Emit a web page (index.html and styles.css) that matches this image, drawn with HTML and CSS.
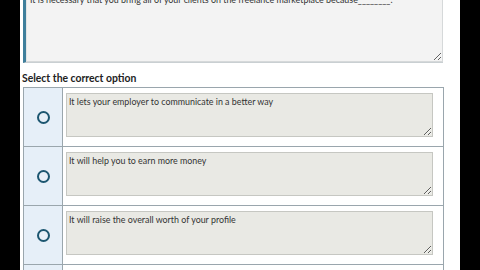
FILE: index.html
```html
<!DOCTYPE html>
<html>
<head>
<meta charset="utf-8">
<link rel="stylesheet" href="styles.css">
</head>
<body>
<div class="frame">
  <div class="side"></div>
  <main class="main">
    <div class="question-wrap">
      <textarea class="question" readonly>It is necessary that you bring all of your clients on the freelance marketplace because________.</textarea>
    </div>
    <div class="label">Select the correct option</div>
    <div class="options">
      <div class="row">
        <div class="radio-cell"><span class="radio"></span></div>
        <div class="answer-cell"><textarea class="answer" readonly>It lets your employer to communicate in a better way</textarea></div>
      </div>
      <div class="row">
        <div class="radio-cell"><span class="radio"></span></div>
        <div class="answer-cell"><textarea class="answer" readonly>It will help you to earn more money</textarea></div>
      </div>
      <div class="row">
        <div class="radio-cell"><span class="radio"></span></div>
        <div class="answer-cell"><textarea class="answer" readonly>It will raise the overall worth of your profile</textarea></div>
      </div>
      <div class="row">
        <div class="radio-cell"><span class="radio"></span></div>
        <div class="answer-cell"><textarea class="answer" readonly>It will make your profile look more attractive to employers</textarea></div>
      </div>
    </div>
  </main>
  <div class="side"></div>
</div>
</body>
</html>
```

FILE: styles.css
```css
html, body {
  margin: 0;
  padding: 0;
  background: #000;
  width: 480px;
  height: 270px;
  overflow: hidden;
}
.frame {
  display: flex;
  width: 480px;
  height: 270px;
  font-family: "Lato", "Open Sans", sans-serif;
}
.side {
  width: 20px;
  background: #000;
  flex: none;
}
.main {
  width: 440px;
  flex: none;
  background: #fff;
  padding: 0 16px 0 3px;
  box-sizing: border-box;
  overflow: hidden;
}
.question-wrap {
  margin-top: -10px;
  height: 73px;
  border-left: 3px solid #3f7f9c;
  border-bottom: 1px solid #c9cfd2;
  box-sizing: border-box;
  width: 420px;
  background: #f3f3f3;
  display: flex;
}
.question {
  flex: 1;
  margin: 0;
  border: 1px solid #d6d9da;
  border-left: 1px solid #e2e4e5;
  background: #f3f3f3;
  font-family: "Lato", "Open Sans", sans-serif;
  font-size: 8.9px;
  color: #333;
  padding: 3px 3px;
  box-sizing: border-box;
  outline: none;
  resize: both;
}
.label {
  font-weight: bold;
  font-size: 10.4px;
  color: #222;
  padding: 8px 0 2px 0;
  margin-left: -1px;
  line-height: 14px;
}
.options {
  width: 421px;
  border: 1px solid #9aa6ad;
  border-bottom: none;
  box-sizing: border-box;
}
.row {
  display: flex;
  height: 58px;
  border-bottom: 1px solid #9aa6ad;
}
.radio-cell {
  width: 38px;
  flex: none;
  background: #e6eff8;
  border-right: 1px solid #9aa6ad;
  display: flex;
  align-items: center;
  justify-content: center;
}
.radio {
  width: 9px;
  height: 9px;
  border: 2.2px solid #1c5670;
  border-radius: 50%;
}
.answer-cell {
  flex: 1;
  padding: 5px 10px 0 3px;
}
.answer {
  display: block;
  width: 100%;
  height: 44px;
  margin: 0;
  box-sizing: border-box;
  background: #e9e9e4;
  border: 1px solid #c6c7c2;
  font-family: "Lato", "Open Sans", sans-serif;
  font-size: 8.9px;
  color: #333;
  padding: 2px 2px;
  resize: both;
  outline: none;
}
```
